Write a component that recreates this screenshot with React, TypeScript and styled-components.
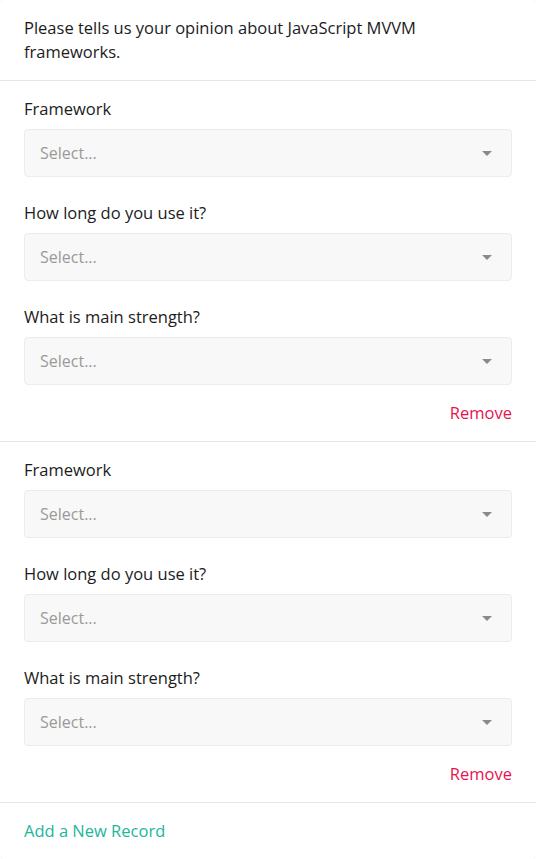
import React from 'react'
import styled, { createGlobalStyle } from 'styled-components'

const GlobalStyle = createGlobalStyle`
  html, body {
    margin: 0;
    padding: 0;
    background: #ffffff;
  }
  body {
    font-family: "Open Sans", "Liberation Sans", sans-serif;
    font-size: 16.5px;
    line-height: 24px;
    color: #1c1c1c;
  }
`

const Card = styled.div`
  background: #fff;
  border-radius: 4px;
  box-shadow: 0 0 1px rgba(0, 0, 0, 0.12);
  overflow: hidden;
`

const Header = styled.div`
  padding: 16px 24px;
  max-width: 430px;
`

const Section = styled.div`
  padding: 16px 24px;
  border-top: 1px solid #e6e6e6;
`

const Fields = styled.div`
  display: flex;
  flex-direction: column;
  gap: 24px;
  margin-bottom: 16px;
`

const Label = styled.label`
  display: block;
  margin-bottom: 8px;
`

const SelectBox = styled.div`
  display: flex;
  align-items: center;
  justify-content: space-between;
  box-sizing: border-box;
  height: 48px;
  padding: 0 19px 0 15px;
  background: #f8f8f8;
  border: 1px solid #ececec;
  border-radius: 4px;
  color: #9a9a9a;
  font-size: 16px;
  cursor: pointer;
`

const Caret = styled.span`
  width: 0;
  height: 0;
  border-left: 5px solid transparent;
  border-right: 5px solid transparent;
  border-top: 5px solid #8a8a8a;
`

const Actions = styled.div`
  display: flex;
  justify-content: flex-end;
`

const LinkButton = styled.button<{ $tone: 'danger' | 'primary' }>`
  background: none;
  border: 0;
  padding: 0;
  font: inherit;
  cursor: pointer;
  color: ${(p) => (p.$tone === 'danger' ? '#e8124e' : '#21b69a')};
`

const questions = ['Framework', 'How long do you use it?', 'What is main strength?']

const Record: React.FC = () => (
  <Section>
    <Fields>
      {questions.map((q) => (
        <div key={q}>
          <Label>{q}</Label>
          <SelectBox>
            <span>Select...</span>
            <Caret />
          </SelectBox>
        </div>
      ))}
    </Fields>
    <Actions>
      <LinkButton $tone="danger">Remove</LinkButton>
    </Actions>
  </Section>
)

export default function App() {
  return (
    <>
      <GlobalStyle />
      <Card>
        <Header>Please tells us your opinion about JavaScript MVVM frameworks.</Header>
        <Record />
        <Record />
        <Section>
          <LinkButton $tone="primary">Add a New Record</LinkButton>
        </Section>
      </Card>
    </>
  )
}
